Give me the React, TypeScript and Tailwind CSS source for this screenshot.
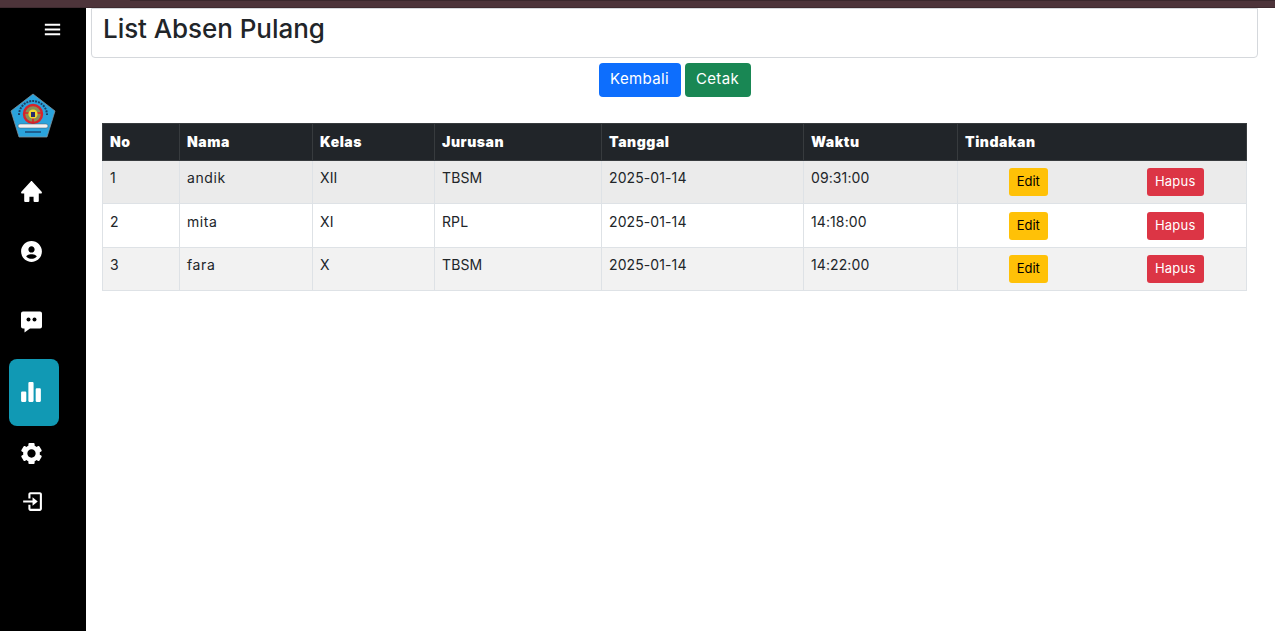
import { BiMenu, BiSolidHome, BiSolidUserCircle, BiSolidBarChartAlt2, BiSolidCog, BiLogIn } from 'react-icons/bi';

const rows = [
  { no: 1, nama: 'andik', kelas: 'XII', jurusan: 'TBSM', tanggal: '2025-01-14', waktu: '09:31:00', bg: 'bg-[#ebebeb]', h: 'h-[43px]', textPad: 'pt-[6px]', btnPad: 'pt-[7px]' },
  { no: 2, nama: 'mita', kelas: 'XI', jurusan: 'RPL', tanggal: '2025-01-14', waktu: '14:18:00', bg: 'bg-white', h: 'h-[44px]', textPad: 'pt-[7px]', btnPad: 'pt-[8px]' },
  { no: 3, nama: 'fara', kelas: 'X', jurusan: 'TBSM', tanggal: '2025-01-14', waktu: '14:22:00', bg: 'bg-[#f2f2f2]', h: 'h-[43px]', textPad: 'pt-[6px]', btnPad: 'pt-[7px]' },
];

function Logo() {
  return (
    <svg width="46" height="46" viewBox="0 0 46 46">
      <polygon points="23,1 45,18 37,44 9,44 1,18" fill="#2aa3dc" stroke="#7f8f99" strokeWidth="0.8" />
      <path d="M9 22 A14 14 0 0 1 37 22" fill="none" stroke="#1d3f66" strokeWidth="2" strokeDasharray="2 1" />
      <circle cx="23" cy="21" r="9" fill="#8a8f55" stroke="#d8232a" strokeWidth="2.4" />
      <path d="M14 20 L32 20 M23 21 L23 30" stroke="#d8232a" strokeWidth="1.6" />
      <circle cx="23" cy="21" r="4.6" fill="#f2dc2f" />
      <rect x="21" y="19" width="4" height="5" fill="#2a2f6b" />
      <rect x="8" y="31" width="30" height="4" rx="2" fill="#f1f1f1" stroke="#41586b" strokeWidth="0.5" />
      <rect x="15" y="38" width="16" height="2" fill="#1f5f8f" />
    </svg>
  );
}

function ChatIcon() {
  return (
    <svg width="25" height="25" viewBox="0 0 25 25" fill="none">
      <path d="M4 2.500h17a2 2 0 0 1 2 2v13a2 2 0 0 1-2 2H11l-5.500 4v-4H4a2 2 0 0 1-2-2v-13a2 2 0 0 1 2-2z" fill="#fff" />
      <circle cx="9.500" cy="10.500" r="2" fill="#000" />
      <circle cx="15.500" cy="10.500" r="2" fill="#000" />
    </svg>
  );
}

function Sidebar() {
  return (
    <aside className="flex w-[86px] shrink-0 flex-col bg-black text-white">
      <div className="flex h-[44px] items-start pl-[41px] pt-[10px]">
        <BiMenu size={23} />
      </div>
      <div className="mt-[41px] pl-[10px]">
        <Logo />
      </div>
      <div className="mt-[40px] pl-[19px]"><BiSolidHome size={25} /></div>
      <div className="mt-[35px] pl-[19px]"><BiSolidUserCircle size={25} /></div>
      <div className="mt-[45px] pl-[19px]"><ChatIcon /></div>
      <div className="ml-[9px] mt-[25px] flex h-[67px] w-[50px] items-center rounded-lg bg-[#1199b4] pl-[10px]">
        <BiSolidBarChartAlt2 size={25} />
      </div>
      <div className="mt-[15px] pl-[19px]"><BiSolidCog size={25} /></div>
      <div className="mt-[23px] pl-[19px]"><BiLogIn size={25} /></div>
    </aside>
  );
}

const th = 'border border-[#373b3e] pb-[2px] pl-[7px] pr-2 text-left text-[14px] font-black tracking-[0.55px] text-white';
const td = 'border border-[#dee2e6] pl-[7px] pr-2 align-top text-[14px] tracking-[0.1px] text-[#212529]';

export default function App() {
  return (
    <div className="flex h-[631px] w-[1275px] flex-col overflow-hidden bg-white font-['Inter',sans-serif] text-[#212529]">
      <div className="flex h-[8px] shrink-0 flex-col justify-between bg-[#4d343a]">
        <div className="ml-[130px] h-px bg-[#3a282d]" />
        <div className="h-px bg-[#3f2b30]" />
      </div>
      <div className="flex flex-1">
        <Sidebar />
        <main className="flex-1 pl-[5px] pr-[17px]">
          <div className="h-[50px] rounded-b border border-[#d5d8dc] px-[11px] pt-[2px] text-[26px] font-medium leading-[36px] tracking-[-0.06px]">
            List Absen Pulang
          </div>
          <div className="mt-[5px] flex justify-center gap-1">
            <button className="h-[34px] w-[82px] rounded bg-[#0d6efd] pb-px text-[15px] tracking-[0.35px] text-white">Kembali</button>
            <button className="h-[34px] w-[66px] rounded bg-[#198754] pb-px text-[15px] tracking-[0.35px] text-white">Cetak</button>
          </div>
          <div className="ml-[11px] mr-[11px] mt-[26px]">
            <table className="w-[1144px] table-fixed border-collapse">
              <colgroup>
                <col className="w-[77px]" />
                <col className="w-[133px]" />
                <col className="w-[122px]" />
                <col className="w-[167px]" />
                <col className="w-[202px]" />
                <col className="w-[154px]" />
                <col className="w-[143px]" />
                <col className="w-[146px]" />
              </colgroup>
              <thead>
                <tr className="h-[37px] bg-[#212529]">
                  <th className={th}>No</th>
                  <th className={th}>Nama</th>
                  <th className={th}>Kelas</th>
                  <th className={th}>Jurusan</th>
                  <th className={th}>Tanggal</th>
                  <th className={th}>Waktu</th>
                  <th className={th} colSpan={2}>Tindakan</th>
                </tr>
              </thead>
              <tbody>
                {rows.map((r) => (
                  <tr key={r.no} className={`${r.bg} ${r.h}`}>
                    <td className={`${td} ${r.textPad}`}>{r.no}</td>
                    <td className={`${td} ${r.textPad} tracking-[0.6px]`}>{r.nama}</td>
                    <td className={`${td} ${r.textPad}`}>{r.kelas}</td>
                    <td className={`${td} ${r.textPad}`}>{r.jurusan}</td>
                    <td className={`${td} ${r.textPad}`}>{r.tanggal}</td>
                    <td className={`${td} ${r.textPad}`}>{r.waktu}</td>
                    <td className={`border-y border-l border-[#dee2e6] align-top ${r.btnPad}`}>
                      <div className="flex justify-center pr-[2px]">
                        <button className="h-[28px] w-[39px] rounded-[3px] bg-[#ffc107] text-[13px] text-black">Edit</button>
                      </div>
                    </td>
                    <td className={`border-y border-r border-[#dee2e6] align-top ${r.btnPad}`}>
                      <div className="flex justify-center pl-[4px]">
                        <button className="h-[28px] w-[57px] rounded-[3px] bg-[#dc3545] pb-px text-[13px] tracking-[0.2px] text-white">Hapus</button>
                      </div>
                    </td>
                  </tr>
                ))}
              </tbody>
            </table>
          </div>
        </main>
      </div>
    </div>
  );
}
